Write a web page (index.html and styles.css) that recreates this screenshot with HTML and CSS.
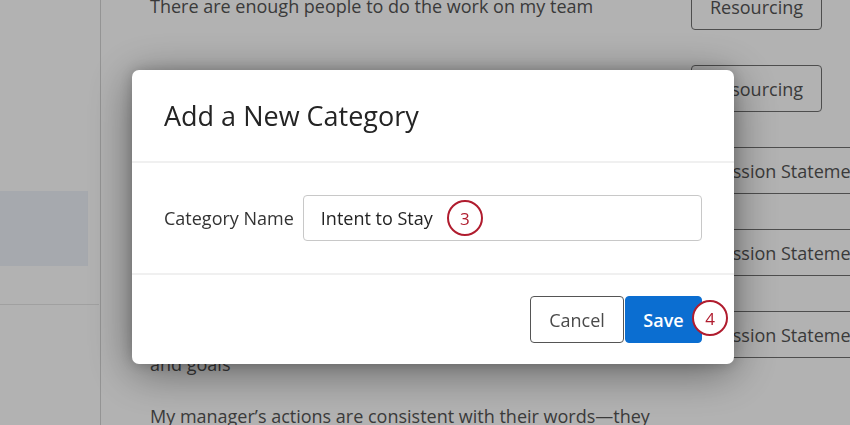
FILE: index.html
```html
<!DOCTYPE html>
<html lang="en">
<head>
<meta charset="utf-8">
<title>Add a New Category</title>
<link rel="stylesheet" href="styles.css">
</head>
<body>
<div class="page">
  <aside class="sidebar">
    <div class="side-active"></div>
    <div class="side-sep"></div>
  </aside>
  <main class="main">
    <div class="rows">
      <div class="row">
        <p class="row-text">There are enough people to do the work on my team</p>
        <span class="tag">Resourcing</span>
      </div>
      <div class="row">
        <p class="row-text">My team has the people it needs to get work done</p>
        <span class="tag">Resourcing</span>
      </div>
      <div class="row">
        <p class="row-text">I understand the mission of this organization</p>
        <span class="tag tag-wide">Mission Statement</span>
      </div>
      <div class="row">
        <p class="row-text">I believe in the mission of this organization</p>
        <span class="tag tag-wide">Mission Statement</span>
      </div>
      <div class="row">
        <p class="row-text">My work supports the organization’s mission<br>and goals</p>
        <span class="tag tag-wide">Mission Statement</span>
      </div>
      <div class="row">
        <p class="row-text">My manager’s actions are consistent with their words—they follow through</p>
      </div>
    </div>
  </main>
</div>

<div class="overlay"></div>

<div class="modal" role="dialog" aria-labelledby="modal-title">
  <div class="modal-header">
    <h2 id="modal-title" class="modal-title">Add a New Category</h2>
  </div>
  <div class="modal-body">
    <label class="field-label" for="cat-name">Category Name</label>
    <div class="field">
      <input id="cat-name" class="field-input" type="text" value="Intent to Stay">
      <span class="step step-3">3</span>
    </div>
  </div>
  <div class="modal-footer">
    <button class="btn btn-cancel" type="button">Cancel</button>
    <div class="save-wrap">
      <button class="btn btn-save" type="button">Save</button>
      <span class="step step-4">4</span>
    </div>
  </div>
</div>
</body>
</html>
```

FILE: styles.css
```css
* { box-sizing: border-box; }

html, body {
  margin: 0;
  padding: 0;
  width: 850px;
  height: 425px;
  overflow: hidden;
  background: #ffffff;
  font-family: "Open Sans", "Liberation Sans", sans-serif;
}

.page {
  display: flex;
  height: 425px;
  overflow: hidden;
}

.sidebar {
  width: 101px;
  flex: none;
  border-right: 1px solid #d4d4d4;
  background: #ffffff;
  padding-top: 191px;
}

.side-active {
  width: 88px;
  height: 75px;
  background: #eef2f9;
}

.side-sep {
  margin-top: 38px;
  width: 99px;
  height: 1px;
  background: #e6e6e6;
}

.main {
  flex: 1;
  padding-left: 49px;
}

.rows {
  margin-top: -17px;
  display: flex;
  flex-direction: column;
  gap: 35px;
}

.row {
  display: flex;
  align-items: flex-start;
  height: 47px;
}

.row-text {
  margin: 0;
  width: 541px;
  padding-top: 8px;
  padding-right: 20px;
  font-size: 18px;
  line-height: 30px;
  color: #545454;
}

.tag {
  flex: none;
  height: 47px;
  padding: 0 20px;
  border: 1px solid #707070;
  border-radius: 4px;
  display: flex;
  align-items: center;
  font-size: 18px;
  color: #545454;
  width: 131px;
  justify-content: center;
}

.tag-wide {
  width: 200px;
  justify-content: flex-start;
  border-radius: 0;
}

.overlay {
  position: fixed;
  inset: 0;
  background: rgba(0, 0, 0, 0.3);
}

.modal {
  position: fixed;
  left: 132px;
  top: 70px;
  width: 602px;
  height: 294px;
  background: #ffffff;
  border-radius: 7px;
  box-shadow: 0 8px 45px rgba(0, 0, 0, 0.45), 0 0 14px rgba(0, 0, 0, 0.2);
  display: flex;
  flex-direction: column;
}

.modal-header {
  height: 93px;
  padding: 0 32px;
  display: flex;
  align-items: center;
  border-bottom: 2px solid #f0f0f0;
}

.modal-title {
  margin: 0;
  font-size: 27px;
  font-weight: 400;
  color: #242424;
}

.modal-body {
  height: 112px;
  padding: 0 32px;
  display: flex;
  align-items: center;
  gap: 9px;
  border-bottom: 2px solid #f0f0f0;
}

.field-label {
  font-size: 18px;
  color: #333333;
}

.field {
  position: relative;
  flex: 1;
}

.field-input {
  display: block;
  width: 100%;
  height: 46px;
  border: 1px solid #c8c8c8;
  border-radius: 4px;
  padding: 0 17px;
  font-family: inherit;
  font-size: 18px;
  color: #242424;
  background: #ffffff;
  outline: none;
}

.modal-footer {
  flex: 1;
  padding: 0 32px;
  display: flex;
  align-items: center;
  justify-content: flex-end;
  gap: 1px;
}

.btn {
  height: 47px;
  font-family: inherit;
  font-size: 18px;
  border-radius: 4px;
  cursor: pointer;
}

.btn-cancel {
  width: 94px;
  background: #ffffff;
  border: 1px solid #555555;
  color: #4a4a4a;
}

.save-wrap {
  position: relative;
}

.btn-save {
  display: block;
  width: 77px;
  background: #0b6ed1;
  border: 1px solid #0b6ed1;
  color: #ffffff;
  font-weight: 600;
}

.step {
  position: absolute;
  width: 36px;
  height: 36px;
  border: 2.5px solid #b01c2e;
  border-radius: 50%;
  background: #ffffff;
  color: #b01c2e;
  font-size: 17px;
  display: flex;
  align-items: center;
  justify-content: center;
}

.step-3 {
  left: 144px;
  top: 5px;
}

.step-4 {
  left: 67px;
  top: 4px;
}
```
